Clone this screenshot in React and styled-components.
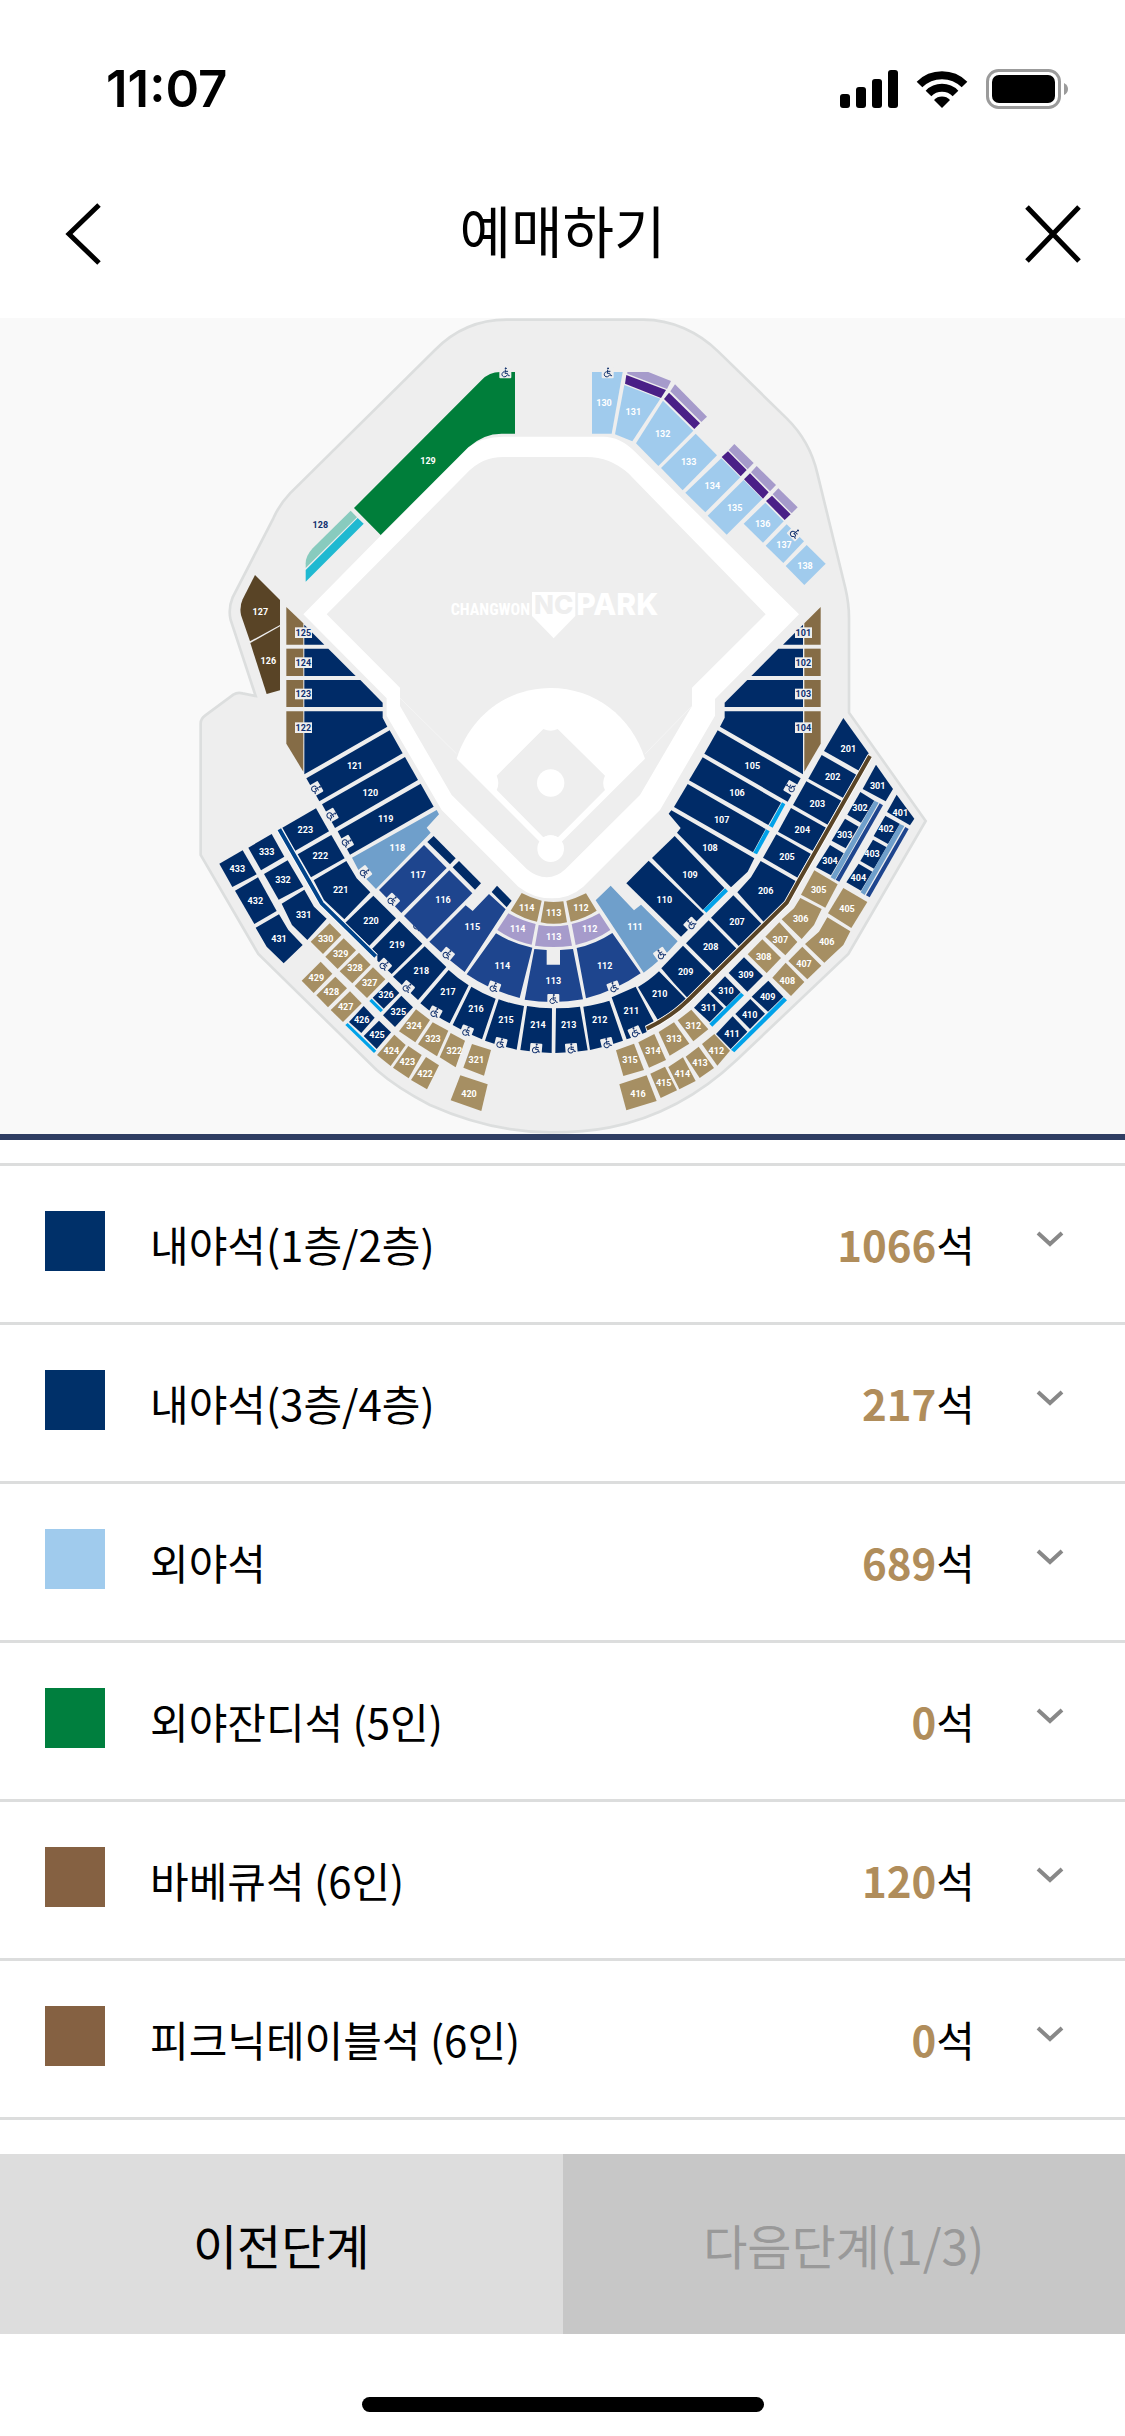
import React from "react";
import styled, { createGlobalStyle } from "styled-components";

const GlobalStyle = createGlobalStyle`
  * { box-sizing: border-box; }
  body {
    margin: 0;
    background: #fff;
    color: #000;
    font-family: "Noto Sans CJK KR", "Noto Sans", sans-serif;
  }
  button { font: inherit; color: inherit; border: 0; margin: 0; padding: 0; background: none; cursor: pointer; }
`;

const Page = styled.div`
  display: flex;
  flex-direction: column;
  min-height: 100vh;
`;

const StatusBar = styled.div`
  display: flex;
  align-items: center;
  justify-content: space-between;
  height: 178px;
  padding: 0 56px 0 106px;
`;

const Clock = styled.time`
  font: 600 51px/60px Inter, "Liberation Sans", sans-serif;
`;

const StatusIcons = styled.div`
  display: flex;
  align-items: center;
  gap: 18px;
`;

const Header = styled.header`
  display: grid;
  grid-template-columns: 1fr auto 1fr;
  align-items: center;
  height: 140px;
  padding: 0 44px 28px;
`;

const Title = styled.h1`
  margin: 0;
  padding-bottom: 10px;
  font-size: 56px;
  font-weight: 400;
  line-height: 80px;
`;

const IconButton = styled.button`
  display: flex;
  justify-self: ${(p) => p.$side};
  padding-left: 20px;
`;

const MapPanel = styled.section`
  background: #f9f9f9;
  border-bottom: 6px solid #2f3e63;
`;

const MapDrawing = styled.svg`
  display: block;
  width: 100%;
  height: auto;
`;

const BlockLabel = styled.text`
  font-family: "Liberation Sans Narrow", Roboto, sans-serif;
  font-size: 27px;
  font-weight: 700;
  text-anchor: middle;
  fill: ${(p) => (p.$dark ? "#0f2f6e" : "#fff")};
`;

const Wordmark = styled.text`
  font-family: ${(p) => (p.$narrow ? '"Liberation Sans Narrow", "Roboto Condensed", Roboto' : "Inter")}, sans-serif;
  font-size: ${(p) => p.$size}px;
  font-weight: ${(p) => (p.$narrow ? 700 : 800)};
  text-anchor: middle;
  fill: ${(p) => p.$fill || "#fff"};
`;

const Grades = styled.ul`
  list-style: none;
  margin: 23px 0 34px;
  padding: 0;
  border-top: 3px solid #dcdddd;
`;

const Grade = styled.li`
  border-bottom: 3px solid #dcdddd;
`;

const GradeButton = styled.button`
  display: flex;
  align-items: center;
  width: 100%;
  height: 156px;
  padding: 0 60px 6px 45px;
  text-align: left;
  font-size: 42px;
  line-height: 60px;
`;

const Swatch = styled.span`
  width: 60px;
  height: 60px;
  margin-right: 45px;
  background: ${(p) => p.$color};
`;

const GradeName = styled.span`
  flex: 1;
  padding-top: 6px;
`;

const Seats = styled.span`
  padding-top: 6px;
  margin-right: 60px;
  strong { font-weight: 700; color: #b08d5b; }
`;

const Chevron = styled.svg`
  width: 30px;
  height: 18px;
  margin-bottom: 4px;
`;

const Steps = styled.div`
  display: grid;
  grid-template-columns: 1fr 1fr;
`;

const StepButton = styled.button`
  height: 180px;
  font-size: 48px;
  font-weight: 400;
  line-height: 72px;
  color: ${(p) => (p.disabled ? "#999" : "#000")};
  background: ${(p) => (p.disabled ? "#c7c7c7" : "#ddd")};
`;

const HomeArea = styled.div`
  display: flex;
  justify-content: center;
  padding: 63px 0 24px;
`;

const HomeBar = styled.div`
  width: 402px;
  height: 15px;
  border-radius: 8px;
  background: #000;
`;

const C = {
  navy: "#002b67",
  royal: "#1e458e",
  steel: "#6f9fcb",
  sky: "#a0cbed",
  cyan: "#00a2e9",
  green: "#007e3a",
  mint: "#88cbbe",
  teal: "#1fb9d1",
  umber: "#594426",
  brown: "#856c46",
  tan: "#a68f63",
  purple: "#4a1f87",
  lilac: "#a69bcb",
};

// Each zone has its own origin; a block is [colour, outline, label, label x, label y].
const zones = [
  {
    at: [570, -24],
    blocks: [
      ["green", "492,594 L875,210 Q898,186 930,186 H975 V371 H935 Q880,371 835,412 L572,675", "129", 714, 452],
      ["mint", "482,602 501,622 347,774 V760 Q347,738 368,715"],
      ["teal", "503,624 521,641 347,815 347,780"],
    ],
    chairs: [[946, 188, 0]],
  },
  {
    at: [1680, -24],
    blocks: [
      ["sky", "96,186 188,186 155,371 96,371", "130", 132, 278],
      ["lilac", "202,186 265,186 333,213 321,237 202,191"],
      ["purple", "199,195 318,240 303,264 195,221"],
      ["sky", "193,225 301,266 217,394 165,373", "131", 220, 306],
      ["lilac", "345,223 441,320 424,336 331,244"],
      ["purple", "327,248 420,340 403,357 312,267"],
      ["sky", "309,272 400,362 295,468 228,400", "132", 308, 371],
      ["sky", "407,371 471,436 368,541 303,474", "133", 386, 456],
      ["lilac", "523,402 581,459 563,478 506,420"],
      ["purple", "504,424 560,480 542,499 485,441"],
      ["sky", "484,445 541,502 436,607 376,548", "134", 457, 527],
      ["lilac", "590,468 648,525 630,544 573,487"],
      ["purple", "570,490 626,547 609,566 552,508"],
      ["sky", "551,510 607,567 500,674 443,617", "135", 524, 594],
      ["lilac", "655,535 713,592 695,610 638,553"],
      ["purple", "636,557 692,613 674,630 618,573"],
      ["sky", "616,578 671,634 609,698 551,641", "136", 608, 641],
      ["sky", "680,643 732,694 670,759 617,707", "137", 672, 704],
      ["sky", "740,705 797,761 733,825 677,768", "138", 735, 767],
    ],
    chairs: [[143, 188, 0], [704, 670, 45]],
  },
  {
    at: [570, 726],
    blocks: [
      ["umber", "195,45 L270,120 V195 L180,244 L153,165 Q148,140 158,118", "127", 211, 154],
      ["umber", "181,249 270,199 270,391 230,402", "126", 235, 302],
      ["brown", "289,141 340,190 340,254 289,254"],
      ["navy", "343,194 403,254 343,254"],
      ["brown", "289,266 340,266 340,348 289,348"],
      ["navy", "343,266 415,266 497,348 343,348"],
      ["brown", "289,360 340,360 340,441 289,441"],
      ["navy", "343,360 511,360 578,428 578,441 343,441"],
      ["brown", "289,454 340,454 340,635 289,551"],
      ["navy", "343,454 578,454 578,473 592,500 343,643"],
      ["navy", "349,655 599,511 638,580 388,724", "121", 494, 617],
      ["navy", "396,733 645,591 684,660 435,804", "120", 541, 697],
      ["navy", "443,814 692,671 731,740 480,884", "119", 587, 777],
    ],
    tags: [["125", 340, 218], ["124", 340, 308], ["123", 340, 402], ["122", 340, 503]],
    chairs: [[378, 686, 60], [424, 766, 60]],
  },
  {
    at: [2010, 726],
    blocks: [
      ["navy", "399,194 399,254 339,254"],
      ["brown", "403,190 452,141 452,254 403,254"],
      ["navy", "325,266 399,266 399,348 244,348"],
      ["brown", "403,266 452,266 452,348 403,348"],
      ["navy", "232,360 399,360 399,441 164,441 164,428"],
      ["brown", "403,360 452,360 452,441 403,441"],
      ["navy", "164,454 399,454 399,643 150,500 164,473"],
      ["brown", "403,454 452,454 452,551 403,635"],
    ],
    tags: [["101", 400, 218], ["102", 400, 308], ["103", 400, 402], ["104", 400, 503]],
  },
  {
    at: [570, 1416],
    blocks: [
      ["steel", "486,203 740,60 747,73 710,113 722,128 558,297 508,245", "118", 622, 173],
      ["royal", "702,165 770,234 634,369 567,300", "117", 684, 253],
      ["navy", "378,55 417,124 316,182 277,113", "223", 346, 119],
      ["navy", "424,135 464,205 363,262 323,193", "222", 391, 197],
      ["navy", "469,213 500,265 541,307 463,388 402,330 371,271", "221", 452, 299],
      ["navy", "550,317 618,385 538,467 466,398", "220", 543, 391],
      ["navy", "628,393 697,461 605,552 562,512 562,493 546,477", "219", 621, 464],
      ["navy", "704,469 769,531 684,630 609,560", "218", 694, 541],
      ["navy", "245,132 283,200 213,241 175,173", "333", 230, 186],
      ["navy", "293,211 340,290 266,329 222,252", "332", 279, 270],
      ["navy", "343,299 372,350 410,386 352,450 306,405 275,341", "331", 341, 375],
      ["navy", "158,181 200,253 127,291 88,221", "433", 142, 237],
      ["navy", "204,262 260,363 193,402 135,302", "432", 196, 333],
      ["navy", "267,373 295,420 338,465 281,520 230,470 197,413", "431", 267, 447],
      ["tan", "419,400 454,435 399,492 362,455", "330", 407, 447],
      ["tan", "461,445 498,481 443,537 406,500", "329", 452, 490],
      ["tan", "507,488 542,524 487,580 449,544", "328", 495, 533],
      ["tan", "549,532 586,568 531,624 494,588", "327", 539, 577],
      ["tan", "392,515 427,551 371,609 335,572", "429", 379, 562],
      ["tan", "436,560 471,595 414,652 379,616", "428", 424, 605],
      ["tan", "480,604 515,640 459,696 422,660", "427", 467, 650],
      ["navy", "596,576 628,609 581,656 548,623", "326", 588, 614],
      ["cyan", "545,626 579,660 572,667 538,633"],
      ["navy", "634,617 669,652 615,711 579,676", "325", 625, 665],
      ["navy", "521,648 554,683 514,729 477,696", "426", 515, 688],
      ["navy", "567,692 603,727 560,777 521,738", "425", 561, 733],
      ["cyan", "473,699 559,782 552,789 466,705"],
      ["tan", "678,658 720,690 676,757 627,724", "324", 672, 706],
      ["tan", "728,697 775,722 741,799 684,763", "323", 729, 745],
      ["tan", "613,734 647,765 602,828 561,795", "424", 604, 781],
      ["tan", "655,768 695,795 656,865 609,833", "423", 652, 816],
      ["tan", "708,801 747,826 711,898 663,870", "422", 705, 850],
    ],
    chairs: [[470, 157, 60], [524, 248, 52], [607, 331, 45], [684, 407, 45], [583, 526, 45], [652, 593, 40], [735, 668, 33]],
  },
  {
    at: [1290, 1416],
    blocks: [
      ["navy", "11,138 77,205 60,223 -8,156"],
      ["navy", "87,213 153,280 135,299 68,232"],
      ["navy", "201,287 245,332 230,352 185,306"],
      ["royal", "58,241 127,310 -9,447 -78,378", "116", 39, 329],
      ["royal", "107,346 128,363 177,312 227,358 104,546 Q50,505 -2,455", "115", 127, 410],
      ["royal", "198,430 Q250,462 307,473 L269,624 Q185,603 110,553", "114", 217, 526],
      ["royal", "313,477 350,480 350,524 390,524 390,480 429,477 459,628 Q372,643 284,629", "113", 370, 573],
      ["royal", "440,474 Q495,463 547,429 L632,550 Q555,603 468,625", "112", 524, 526],
      ["lilac", "235,370 Q275,392 317,402 L305,464 Q250,453 202,420", "114", 263, 417],
      ["lilac", "326,405 Q370,413 414,405 L426,467 Q370,475 315,467", "113", 371, 440],
      ["lilac", "425,402 Q465,394 508,370 L541,420 Q495,452 437,465", "112", 479, 416],
      ["tan", "275,309 Q303,324 335,332 L321,395 Q280,386 242,362", "114", 290, 353],
      ["tan", "343,334 Q370,338 400,334 L411,397 Q370,406 332,397", "113", 371, 368],
      ["tan", "409,333 Q440,324 468,310 L500,362 Q465,385 422,395", "112", 453, 353],
      ["steel", "542,287 612,361 633,344 743,454 Q695,510 641,548 L497,331", "111", 615, 410],
      ["navy", "460,650 Q505,643 538,632 L579,752 Q530,770 480,780", "212", 509, 690],
      ["navy", "378,655 Q415,655 450,650 L473,781 Q425,789 376,789", "213", 416, 703],
      ["navy", "291,648 Q330,655 366,655 L365,789 Q320,788 271,780", "214", 324, 704],
      ["navy", "206,628 Q245,642 282,648 L260,779 Q210,768 165,752", "215", 228, 690],
      ["navy", "124,590 Q160,612 197,626 L156,748 Q110,730 68,705", "216", 138, 656],
      ["navy", "56,540 Q85,567 116,586 L59,700 Q10,675 -29,640", "217", 54, 606],
      ["tan", "62,729 105,752 77,832 29,802", "322", 73, 781],
      ["tan", "126,762 183,780 162,857 100,833", "321", 139, 809],
      ["tan", "91,856 173,883 154,963 62,931", "420", 117, 910],
    ],
    chairs: [[52, 493, 40], [192, 592, 20], [370, 628, 0], [551, 592, -20], [15, 668, 28], [110, 724, 22], [212, 760, 14], [318, 776, 5], [424, 776, -5], [531, 760, -14], [692, 493, -35]],
  },
  {
    at: [2010, 1116],
    blocks: [
      ["navy", "143,121 392,265 353,335 103,191", "105", 247, 227],
      ["navy", "98,202 333,338 295,405 57,271", "106", 201, 307],
      ["cyan", "336,337 346,343 308,413 297,407"],
      ["navy", "53,282 287,417 249,487 12,351", "107", 155, 388],
      ["cyan", "288,418 299,424 261,493 250,488"],
      ["navy", "4,361 253,505 233,545 183,592 21,428 32,414 -4,371", "108", 120, 474],
      ["navy", "520,84 596,190 567,242 462,183", "201", 535, 175],
      ["navy", "455,195 560,255 520,324 415,266", "202", 488, 260],
      ["navy", "409,274 514,332 473,404 369,345", "203", 442, 340],
      ["navy", "363,354 468,413 429,483 324,425", "204", 397, 420],
      ["navy", "319,433 423,492 383,563 279,503", "205", 351, 499],
      ["navy", "618,224 669,297 647,334 578,297", "301", 623, 288],
      ["navy", "571,306 613,332 573,398 532,374", "302", 570, 352],
      ["navy", "525,386 566,410 527,475 485,452", "303", 524, 433],
      ["navy", "480,465 521,490 483,556 438,532", "304", 480, 512],
      ["steel", "613,332 626,338 495,569 482,562"],
      ["royal", "629,340 639,346 508,575 497,569"],
      ["navy", "680,314 733,386 720,406 651,366", "401", 691, 368],
      ["navy", "646,377 690,402 654,462 611,438", "402", 648, 417],
      ["navy", "609,449 650,472 612,536 571,513", "403", 606, 490],
      ["navy", "566,521 607,545 573,602 529,577", "404", 565, 563],
      ["steel", "689,402 703,408 584,615 572,607"],
      ["royal", "706,411 716,417 599,622 588,616"],
      ["tan", "433,541 503,583 466,653 393,614", "305", 446, 600],
    ],
    chairs: [[362, 293, -60]],
  },
  {
    at: [1830, 1686],
    blocks: [
      ["navy", "116,-58 282,102 213,170 49,10", "110", 163, 60],
      ["navy", "194,-132 343,24 279,90 126,-66", "109", 240, -17],
      ["cyan", "345,25 354,34 289,98 280,89"],
      ["navy", "452,-57 558,4 524,67 462,127 382,37 423,-8", "206", 467, 31],
      ["navy", "370,46 455,132 387,199 303,113", "207", 381, 124],
      ["navy", "296,121 380,206 311,273 228,190", "208", 302, 199],
      ["navy", "219,197 303,281 232,353 Q190,310 154,265", "209", 227, 275],
      ["navy", "147,274 L228,357 Q190,395 143,419 L84,321 Q120,300 147,274", "210", 149, 340],
      ["navy", "5,352 L77,320 L131,424 L105,438 L110,456 Q80,470 50,478", "211", 64, 392],
      ["tan", "18,511 72,491 102,570 40,588", "315", 60, 540],
      ["tan", "85,487 133,462 168,540 117,563", "314", 129, 512],
      ["tan", "146,456 192,427 238,491 179,527", "313", 192, 476],
      ["tan", "203,421 244,389 295,448 250,484", "312", 250, 437],
      ["navy", "295,338 341,384 299,427 252,383", "311", 296, 384],
      ["navy", "345,289 392,337 349,380 302,334", "310", 348, 332],
      ["cyan", "393,338 402,346 307,440 298,431"],
      ["navy", "402,232 459,288 412,335 356,279", "309", 408, 283],
      ["tan", "457,178 513,234 470,279 413,223", "308", 461, 230],
      ["tan", "508,127 562,186 526,226 466,170", "307", 511, 180],
      ["tan", "571,54 635,87 612,135 575,177 515,118 552,85", "306", 572, 117],
      ["tan", "700,24 772,66 724,144 654,100", "405", 711, 86],
      ["tan", "652,112 721,154 700,195 643,248 585,192 627,155", "406", 650, 184],
      ["tan", "577,200 634,257 592,298 535,243", "407", 582, 252],
      ["tan", "527,248 583,306 543,348 487,293", "408", 532, 302],
      ["navy", "475,302 520,350 474,395 425,350", "409", 473, 350],
      ["navy", "421,357 465,401 420,447 376,402", "410", 419, 403],
      ["navy", "368,409 412,455 362,507 318,462", "411", 366, 460],
      ["cyan", "521,352 531,361 373,517 363,509"],
      ["tan", "313,462 360,512 322,557 276,492", "412", 319, 513],
      ["tan", "266,500 312,564 269,594 227,530", "413", 270, 547],
      ["tan", "219,532 257,603 208,628 175,561", "414", 217, 580],
      ["tan", "165,560 201,631 152,654 121,581", "415", 161, 608],
      ["tan", "28,613 110,586 140,663 49,691", "416", 84, 640],
    ],
    chairs: [[243, 133, -45], [75, 457, -25]],
  },
];

function Wheelchair({ x, y, turn }) {
  return (
    <g transform={`translate(${x} ${y}) rotate(${turn})`}>
      <rect x="-18" y="-16" width="36" height="33" rx="3" fill="#eee" />
      <g fill="none" stroke="#14336f" strokeWidth="3" strokeLinecap="round">
        <circle cx="1" cy="-13" r="1.5" fill="#14336f" />
        <path d="M0 -8 L-1 2 H6 L9 9 H12 M0 -4 H7" />
        <path d="M-4 -3 A8 8 0 1 0 5 8" />
      </g>
    </g>
  );
}

function Zone({ at, blocks, tags = [], chairs = [] }) {
  return (
    <g transform={`translate(${at[0]} ${at[1]})`}>
      {blocks.map(([color, outline, label, x, y]) => (
        <g key={outline}>
          <path d={`M${outline}Z`} fill={C[color]} />
          {label && <BlockLabel x={x} y={y + 10}>{label}</BlockLabel>}
        </g>
      ))}
      {tags.map(([label, x, y]) => (
        <g key={label}>
          <rect x={x - 25} y={y - 16} width="51" height="32" fill="#eee" />
          <BlockLabel $dark x={x} y={y + 10}>{label}</BlockLabel>
        </g>
      ))}
      {chairs.map(([x, y, turn]) => (
        <Wheelchair key={`${x}-${y}`} x={x} y={y} turn={turn} />
      ))}
    </g>
  );
}

function StadiumMap() {
  return (
    <MapDrawing viewBox="0 0 3375 2448" role="img" aria-label="창원NC파크 좌석 배치도">
      <path
        d="M1520 5 H1930 C2015 5 2095 42 2155 101 L2360 301 C2410 350 2437 400 2452 466 L2536 810 Q2547 856 2547 900 V1184 L2777 1509 L2545 1908 L2210 2226 C2100 2330 1970 2400 1830 2428 C1770 2440 1710 2443 1650 2443 C1520 2443 1400 2410 1290 2361 C1230 2330 1180 2300 1130 2256 L775 1908 L602 1611 V1216 Q602 1202 616 1192 L700 1130 Q712 1122 728 1126 L767 1134 L692 906 Q684 872 698 838 L820 601 Q838 560 870 526 L1305 96 C1365 35 1440 5 1520 5Z"
        fill="#eee"
        stroke="#dcdede"
        strokeWidth="8"
      />
      <path
        d="M910 889 L1400 391 Q1445 356 1510 356 H1810 Q1860 356 1905 401 L2397 889 L2145 1143 V1193 L1980 1476 L1750 1706 Q1710 1741 1655 1741 Q1600 1741 1555 1706 L1325 1476 L1160 1193 V1141Z"
        fill="#fff"
      />
      <path
        d="M980 889 L1400 466 Q1445 417 1510 417 H1760 Q1830 417 1885 466 L2297 889 L2076 1109 V1164 L1920 1431 L1696 1654 Q1670 1678 1640 1678 Q1610 1678 1581 1654 L1355 1431 L1200 1164 V1109Z"
        fill="#eee"
      />
      <path d="M1200 1140 L1370 1308 M2076 1164 L1935 1308" stroke="#f5f5f5" strokeWidth="3" />
      <path d="M1370 1322 C1410 1195 1520 1110 1652 1110 S1894 1195 1935 1322 L1652 1604Z" fill="#fff" />
      <path
        d="M1630 1233 Q1652 1243 1673 1233 L1815 1373 Q1804 1395 1815 1416 L1674 1558 Q1652 1546 1630 1558 L1490 1416 Q1500 1395 1490 1373Z"
        fill="#eee"
      />
      <circle cx="1652" cy="1395" r="41" fill="#fff" />
      <circle cx="1652" cy="1592" r="40" fill="#fff" />
      <g transform="translate(1290 726)">
        <Wordmark $narrow $size={48} x="181" y="166">CHANGWON</Wordmark>
        <path d="M306 96 H436 V168 L371 235 L306 168Z" fill="#fff" />
        <Wordmark $size={78} $fill="#eee" x="371" y="163">NC</Wordmark>
        <Wordmark $size={90} x="562" y="166">PARK</Wordmark>
      </g>
      {zones.map((zone) => (
        <Zone key={zone.at.join()} {...zone} />
      ))}
      <BlockLabel $dark x="961" y="631">128</BlockLabel>
      <g fill="none">
        <path d="M2610 1314 L2398 1686 L2360 1754 L2065 2046 Q2015 2096 1940 2132" stroke="#fff" strokeWidth="17" />
        <path d="M2610 1314 L2398 1686 L2360 1754 L2065 2046 Q2015 2096 1940 2132" stroke={C.umber} strokeWidth="12" />
        <path d="M838 1534 L965 1756 L1127 1915" stroke="#fff" strokeWidth="17" />
        <path d="M838 1534 L965 1756 L1127 1915" stroke="#00438a" strokeWidth="12" />
      </g>
    </MapDrawing>
  );
}

const SignalIcon = () => (
  <svg width="58" height="38" viewBox="0 0 58 38" aria-hidden="true">
    <rect x="0" y="24" width="10" height="14" rx="3" />
    <rect x="16" y="17" width="10" height="21" rx="3" />
    <rect x="32" y="9" width="10" height="29" rx="3" />
    <rect x="48" y="0" width="10" height="38" rx="3" />
  </svg>
);

const WifiIcon = () => (
  <svg width="52" height="38" viewBox="0 0 52 38" aria-hidden="true">
    <g fill="none" stroke="#000" strokeWidth="8">
      <path d="M3.5 14.5 A32 32 0 0 1 48.5 14.5" />
      <path d="M12.5 23.5 A19 19 0 0 1 39.5 23.5" />
    </g>
    <path d="M26 38 L18 30 A11 11 0 0 1 34 30Z" />
  </svg>
);

const BatteryIcon = () => (
  <svg width="83" height="40" viewBox="0 0 83 40" aria-hidden="true">
    <rect x="1.5" y="1.5" width="72" height="37" rx="11" fill="none" stroke="#9b9b9b" strokeWidth="3" />
    <rect x="6" y="6" width="63" height="28" rx="7" />
    <path d="M78 14 Q82 16 82 20 T78 26Z" fill="#9b9b9b" />
  </svg>
);

const BackIcon = () => (
  <svg width="38" height="62" viewBox="0 0 38 62" aria-hidden="true">
    <path d="M35 2 L5 31 L35 60" fill="none" stroke="#000" strokeWidth="5" />
  </svg>
);

const CloseIcon = () => (
  <svg width="56" height="58" viewBox="0 0 56 58" aria-hidden="true">
    <path d="M2 2 L54 56 M54 2 L2 56" fill="none" stroke="#000" strokeWidth="5" />
  </svg>
);

const ChevronIcon = () => (
  <Chevron viewBox="0 0 30 18" aria-hidden="true">
    <path d="M3 3 L15 14 L27 3" fill="none" stroke="#888" strokeWidth="4" />
  </Chevron>
);

const grades = [
  { name: "내야석(1층/2층)", seats: 1066, color: "#003069" },
  { name: "내야석(3층/4층)", seats: 217, color: "#003069" },
  { name: "외야석", seats: 689, color: "#a0cbed" },
  { name: "외야잔디석 (5인)", seats: 0, color: "#007f3e" },
  { name: "바베큐석 (6인)", seats: 120, color: "#856142" },
  { name: "피크닉테이블석 (6인)", seats: 0, color: "#856142" },
];

export default function App() {
  return (
    <Page>
      <GlobalStyle />
      <StatusBar>
        <Clock>11:07</Clock>
        <StatusIcons>
          <SignalIcon />
          <WifiIcon />
          <BatteryIcon />
        </StatusIcons>
      </StatusBar>
      <Header>
        <IconButton type="button" $side="start" aria-label="뒤로"><BackIcon /></IconButton>
        <Title>예매하기</Title>
        <IconButton type="button" $side="end" aria-label="닫기"><CloseIcon /></IconButton>
      </Header>
      <main>
        <MapPanel><StadiumMap /></MapPanel>
        <Grades>
          {grades.map((g) => (
            <Grade key={g.name}>
              <GradeButton type="button" aria-expanded="false">
                <Swatch $color={g.color} />
                <GradeName>{g.name}</GradeName>
                <Seats><strong>{g.seats}</strong>석</Seats>
                <ChevronIcon />
              </GradeButton>
            </Grade>
          ))}
        </Grades>
      </main>
      <Steps>
        <StepButton type="button">이전단계</StepButton>
        <StepButton type="button" disabled>다음단계(1/3)</StepButton>
      </Steps>
      <HomeArea><HomeBar /></HomeArea>
    </Page>
  );
}
